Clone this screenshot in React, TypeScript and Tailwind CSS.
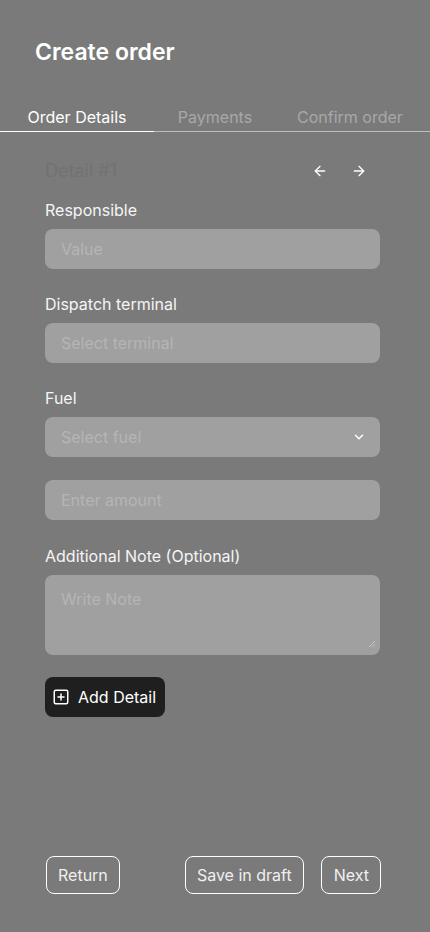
import React from 'react';
import { ArrowLeft, ArrowRight, ChevronDown, SquarePlus } from 'lucide-react';

const inputCls =
  'block w-full h-10 rounded-lg bg-[#a0a0a0] px-4 text-base text-white placeholder:text-[#b5b5b5] outline-none';

function Label({ children }: { children: React.ReactNode }) {
  return <label className="block text-base text-[#f5f5f5] mb-[7px] leading-6">{children}</label>;
}

export default function App() {
  return (
    <div className="min-h-[932px] w-[430px] bg-[#7a7a7a] flex flex-col" style={{ fontFamily: 'Inter, "Noto Sans", sans-serif' }}>
      {/* Header */}
      <h1 className="px-[35px] pt-[36px] text-[23px] leading-8 font-semibold text-white">Create order</h1>

      {/* Tabs */}
      <div className="mt-[37px] flex border-b border-[#bdbdbd] text-base leading-6">
        <div className="w-[154px] text-center text-white pb-[2px] border-b border-white -mb-[1px]">Order Details</div>
        <div className="w-[122px] text-center text-[#a8a8a8]">Payments</div>
        <div className="flex-1 pl-[21px] text-[#a8a8a8]">Confirm order</div>
      </div>

      {/* Form */}
      <div className="px-[45px] pr-[50px] mt-[25px] flex flex-col">
        <div className="flex items-center justify-between h-7">
          <span className="text-lg text-[#727272]">Detail #1</span>
          <div className="flex items-center gap-[23px] pr-[13px] text-white">
            <ArrowLeft size={16} strokeWidth={2} />
            <ArrowRight size={16} strokeWidth={2} />
          </div>
        </div>

        <div className="mt-[13px]">
          <Label>Responsible</Label>
          <input className={inputCls} placeholder="Value" />
        </div>

        <div className="mt-[23px]">
          <Label>Dispatch terminal</Label>
          <input className={inputCls} placeholder="Select terminal" />
        </div>

        <div className="mt-[23px]">
          <Label>Fuel</Label>
          <div className="relative">
            <input className={inputCls} placeholder="Select fuel" />
            <ChevronDown size={14} strokeWidth={2.5} className="absolute right-[14px] top-[13px] text-white" />
          </div>
        </div>

        <input className={`${inputCls} mt-[23px]`} placeholder="Enter amount" />

        <div className="mt-[24px]">
          <Label>Additional Note (Optional)</Label>
          <div className="relative">
            <textarea
              className="block w-full h-20 rounded-lg bg-[#a0a0a0] px-4 py-[12px] text-base text-white placeholder:text-[#b5b5b5] outline-none resize-none"
              placeholder="Write Note"
            />
            {/* resize grip */}
            <svg width="8" height="8" viewBox="0 0 8 8" className="absolute right-[4px] bottom-[7px]">
              <path d="M7 1L1 7M7 4.5L4.5 7" stroke="#c4c4c4" strokeWidth="1" />
            </svg>
          </div>
        </div>

        <button className="mt-[22px] self-start h-10 pl-[7px] pr-[9px] rounded-lg bg-[#1f1f1f] text-white flex items-center gap-[8px] text-base">
          <SquarePlus size={18} strokeWidth={2} />
          Add Detail
        </button>
      </div>

      {/* Footer */}
      <div className="mt-auto pb-[38px] px-[46px] pr-[49px] flex items-center">
        <button className="h-[38px] px-[11px] rounded-lg border border-white text-[#f0f0f0] text-base">Return</button>
        <div className="flex-1" />
        <button className="h-[38px] px-[11px] rounded-lg border border-white text-[#f0f0f0] text-base">Save in draft</button>
        <button className="ml-[17px] h-[38px] pl-[12px] pr-[11px] rounded-lg border border-white text-[#f0f0f0] text-base">Next</button>
      </div>
    </div>
  );
}
